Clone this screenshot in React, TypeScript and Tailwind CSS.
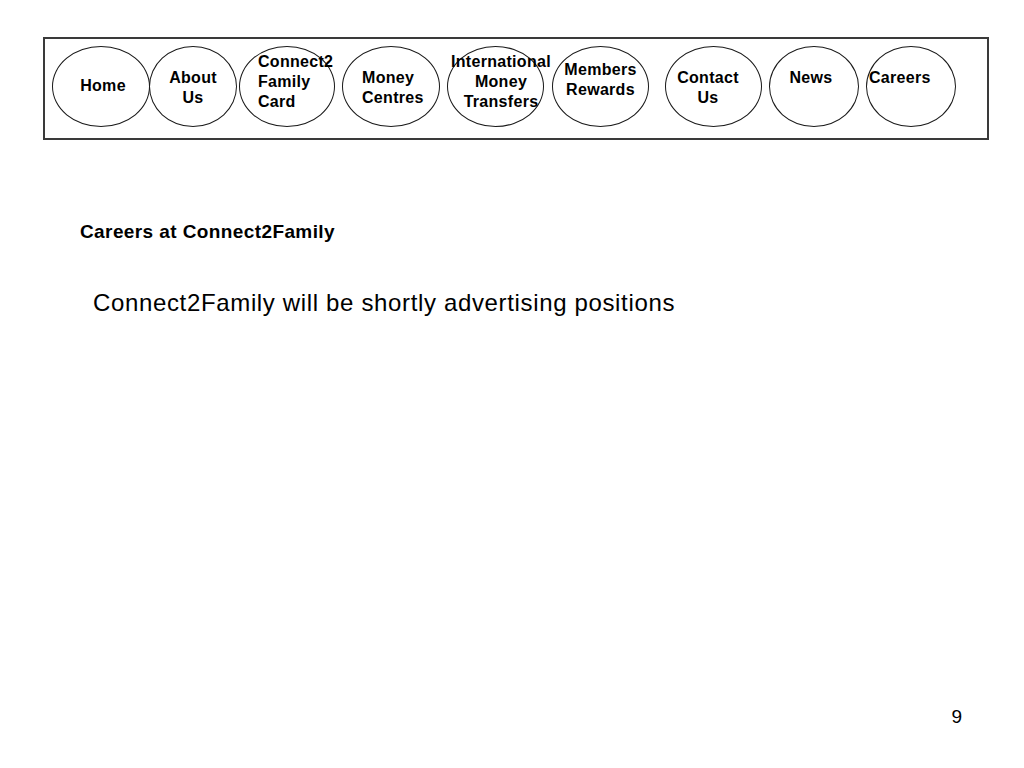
import React from "react";

// nav bubbles of the slide, each with its own text box placement
const navItems: { label: string[]; className: string; textClass: string }[] = [
  { label: ["Home"], className: "ml-[7px] w-[98px]", textClass: "items-center pt-[29px] pl-[4px]" },
  { label: ["About", "Us"], className: "-ml-[1px] w-[88px]", textClass: "items-center pt-[21px]" },
  { label: ["Connect2", "Family", "Card"], className: "ml-[2px] w-[96px]", textClass: "items-start pt-[5px] pl-[18px]" },
  { label: ["Money", "Centres"], className: "ml-[7px] w-[98px]", textClass: "items-start pt-[21px] pl-[19px]" },
  { label: ["International", "Money", "Transfers"], className: "ml-[7px] w-[97px]", textClass: "items-center pt-[5px] pl-[11px]" },
  { label: ["Members", "Rewards"], className: "ml-[8px] w-[97px]", textClass: "items-center pt-[13px]" },
  { label: ["Contact", "Us"], className: "ml-[16px] w-[97px]", textClass: "items-center pt-[21px] pr-[11px]" },
  { label: ["News"], className: "ml-[7px] w-[90px]", textClass: "items-center pt-[21px] pr-[6px]" },
  { label: ["Careers"], className: "ml-[7px] w-[90px]", textClass: "items-start pt-[21px] pl-[2px]" },
];

export default function App() {
  return (
    <div
      className="w-[1024px] h-[768px] bg-white text-black flex flex-col"
      style={{ fontFamily: '"Liberation Sans", Arial, sans-serif' }}
    >
      {/* Navigation box */}
      <div className="ml-[43px] mt-[37px] w-[946px] h-[103px] border-2 border-[#3a3a3a] flex items-start">
        {navItems.map((item) => (
          <div
            key={item.label.join(" ")}
            className={`${item.className} mt-[7px] h-[81px] shrink-0 rounded-[50%] border border-[#1a1a1a] flex flex-col ${item.textClass}`}
          >
            {item.label.map((line) => (
              <span
                key={line}
                className="text-[16px] leading-[20px] font-bold tracking-[0.3px] whitespace-nowrap"
              >
                {line}
              </span>
            ))}
          </div>
        ))}
      </div>

      <h1 className="ml-[80px] mt-[80px] text-[19px] leading-[24px] font-bold tracking-[0.4px]">
        Careers at Connect2Family
      </h1>

      <p className="ml-[93px] mt-[45px] text-[24px] leading-[28px] tracking-[0.65px]">
        Connect2Family will be shortly advertising positions
      </p>

      <div className="mt-auto self-end mr-[62px] mb-[39px] text-[19px] leading-[24px]">9</div>
    </div>
  );
}
